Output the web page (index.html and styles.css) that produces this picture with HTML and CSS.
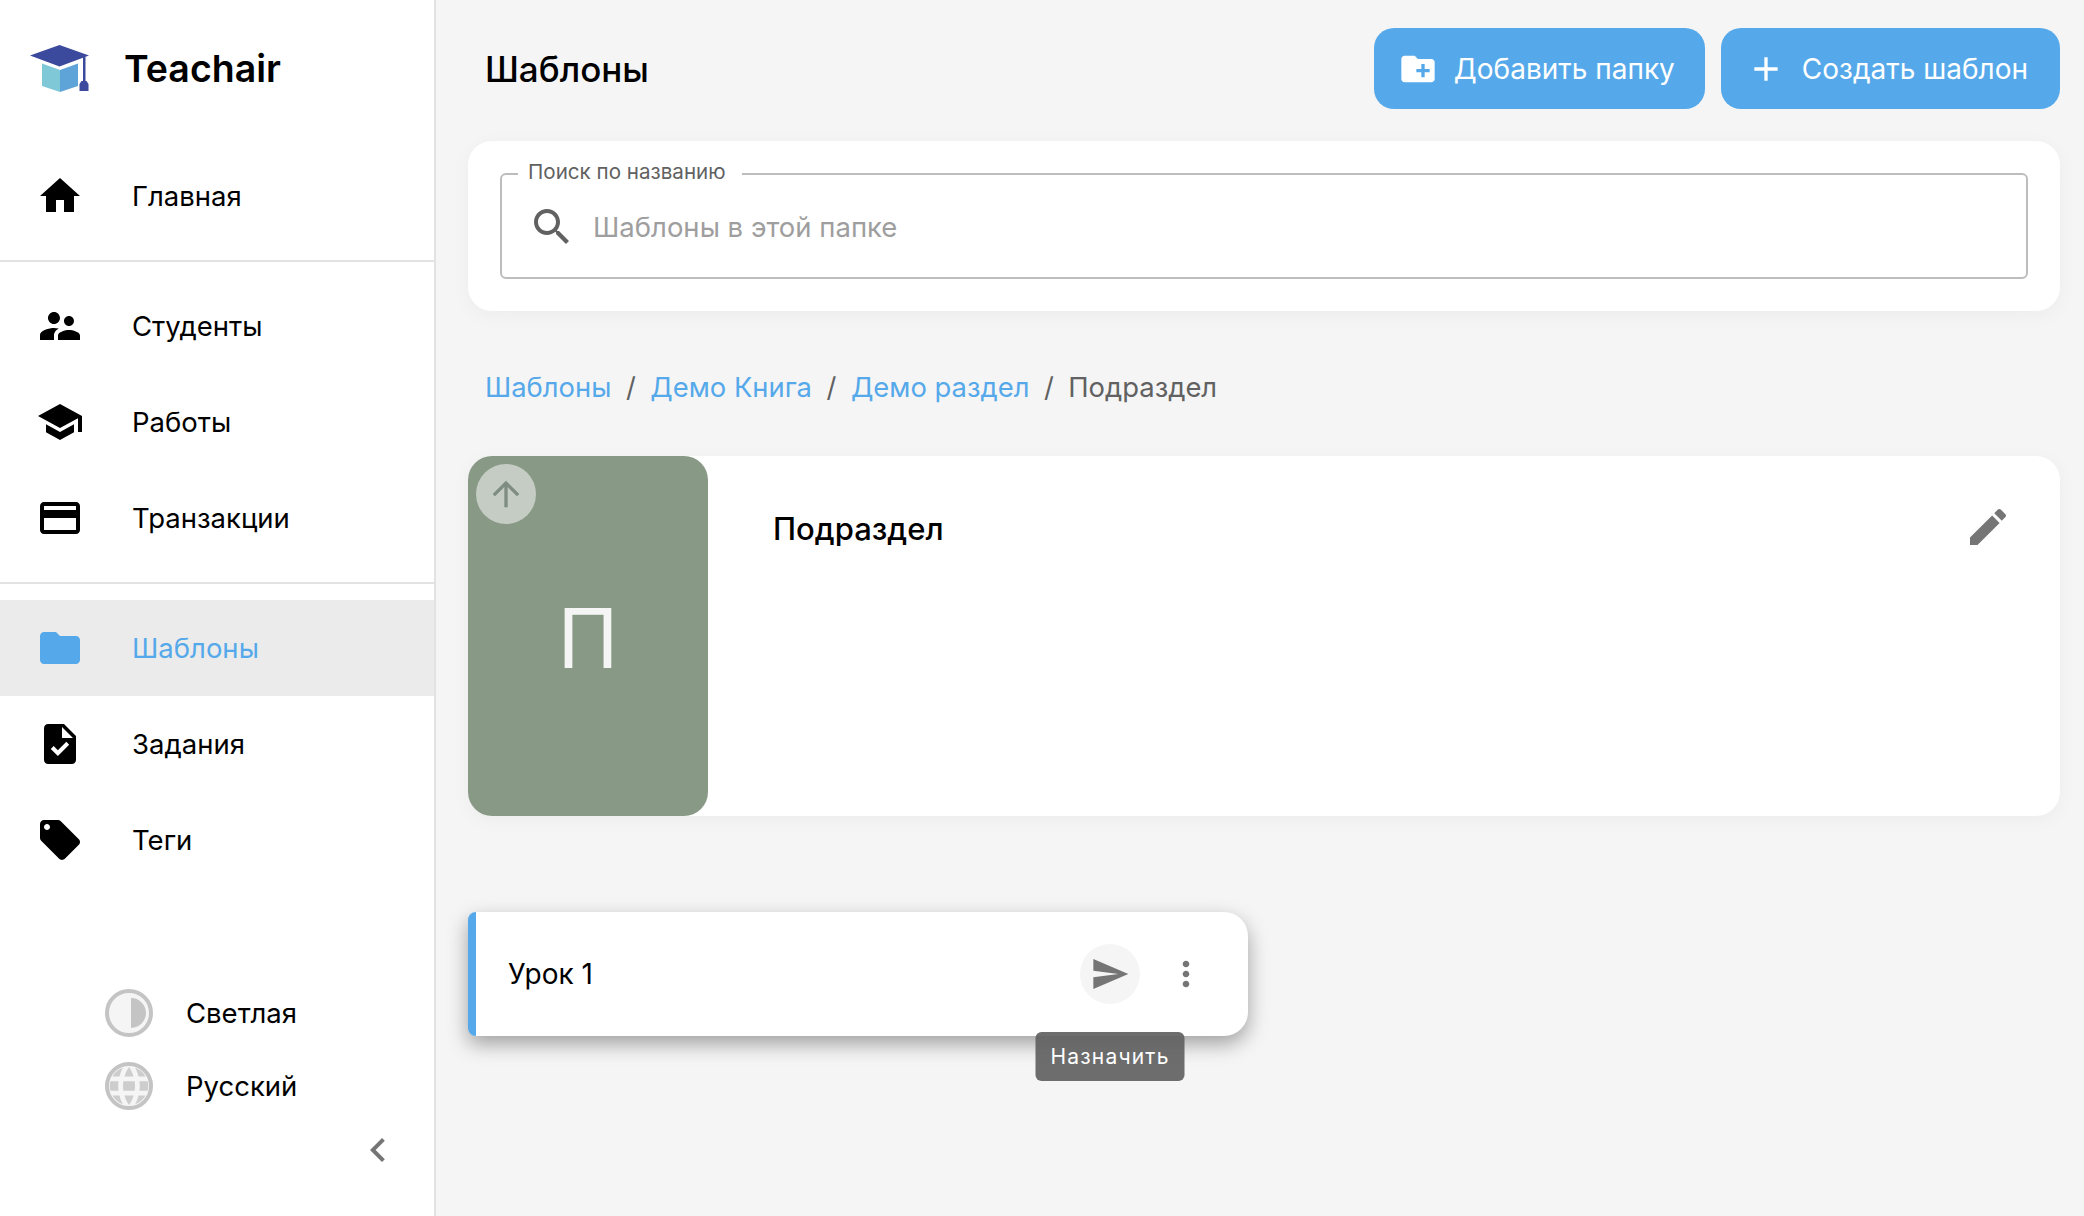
FILE: index.html
```html
<!DOCTYPE html>
<html lang="en">
<head>
    <meta charset="UTF-8">
    <meta name="viewport" content="width=device-width, initial-scale=1.0">
    <title>Teachair</title>
    <link rel="stylesheet" href="styles.css">
</head>
<body>
    <div class="app">
        <aside class="sidebar">
            <div class="logo">
                <svg class="logo-mark" viewBox="30 44 60 48" width="60" height="48">
                    <path fill="#7fc8d8" d="M42 62.500 60 69v22l-18-6z"/>
                    <path fill="#5fa4d8" d="M60 69l18-6.500V85l-18 6z"/>
                    <path fill="#3b4a9c" d="M59.500 44 89 54.500 59.500 65.500 30 54.500z"/>
                    <path fill="#3b4a9c" d="M83 56h2.500v24H83z"/>
                    <path fill="#3b4a9c" d="M81.500 80h5l2 3v7h-9v-7z"/>
                </svg>
                <span class="logo-name">Teachair</span>
            </div>

            <a class="nav-item">
                <svg class="nav-icon" viewBox="0 0 24 24"><path d="M10 20v-6h4v6h5v-8h3L12 3 2 12h3v8z"/></svg>
                <span>Главная</span>
            </a>
            <hr class="nav-divider">
            <a class="nav-item">
                <svg class="nav-icon" viewBox="0 0 24 24"><path d="M16.500 12c1.380 0 2.490-1.120 2.490-2.500S17.880 7 16.500 7C15.120 7 14 8.120 14 9.500s1.120 2.500 2.500 2.500zM9 11c1.660 0 2.990-1.340 2.990-3S10.660 5 9 5C7.340 5 6 6.340 6 8s1.340 3 3 3zm7.500 3c-1.830 0-5.500.92-5.500 2.750V19h11v-2.250c0-1.830-3.670-2.750-5.500-2.750zM9 13c-2.330 0-7 1.170-7 3.500V19h7v-2.250c0-.85.33-2.340 2.370-3.470C10.500 13.100 9.660 13 9 13z"/></svg>
                <span>Студенты</span>
            </a>
            <a class="nav-item">
                <svg class="nav-icon" viewBox="0 0 24 24"><path d="M5 13.180v4L12 21l7-3.820v-4L12 17l-7-3.820zM12 3 1 9l11 6 9-4.910V17h2V9L12 3z"/></svg>
                <span>Работы</span>
            </a>
            <a class="nav-item">
                <svg class="nav-icon" viewBox="0 0 24 24"><path d="M20 4H4c-1.110 0-1.990.89-1.990 2L2 18c0 1.110.89 2 2 2h16c1.110 0 2-.89 2-2V6c0-1.110-.89-2-2-2zm0 14H4v-6h16v6zm0-10H4V6h16v2z"/></svg>
                <span>Транзакции</span>
            </a>
            <hr class="nav-divider">
            <a class="nav-item active">
                <svg class="nav-icon" viewBox="0 0 24 24"><path d="M10 4H4c-1.100 0-1.990.9-1.990 2L2 18c0 1.100.9 2 2 2h16c1.100 0 2-.9 2-2V8c0-1.100-.9-2-2-2h-8l-2-2z"/></svg>
                <span>Шаблоны</span>
            </a>
            <a class="nav-item">
                <svg class="nav-icon" viewBox="0 0 24 24"><path d="M14 2H6c-1.100 0-1.990.9-1.990 2L4 20c0 1.100.89 2 1.990 2H18c1.100 0 2-.9 2-2V8l-6-6zm-3.060 16L7.400 14.460l1.410-1.410 2.120 2.120 4.240-4.240 1.410 1.410L10.940 18zM13 9V3.500L18.500 9H13z"/></svg>
                <span>Задания</span>
            </a>
            <a class="nav-item">
                <svg class="nav-icon" viewBox="0 0 24 24"><path d="M21.410 11.580l-9-9C12.050 2.220 11.550 2 11 2H4c-1.100 0-2 .9-2 2v7c0 .55.22 1.050.59 1.420l9 9c.36.36.86.58 1.410.58.55 0 1.050-.22 1.410-.59l7-7c.37-.36.59-.86.59-1.410 0-.55-.23-1.060-.59-1.420zM5.500 7C4.670 7 4 6.330 4 5.500S4.670 4 5.500 4 7 4.670 7 5.500 6.330 7 5.500 7z"/></svg>
                <span>Теги</span>
            </a>

            <div class="sidebar-bottom">
                <div class="setting">
                    <svg class="setting-icon" viewBox="0 0 48 48">
                        <circle cx="24" cy="24" r="22" fill="#f5f5f5" stroke="#c4c4c4" stroke-width="4"/>
                        <path fill="#c4c4c4" d="M26 9a15 15 0 0 1 0 30z"/>
                    </svg>
                    <span>Светлая</span>
                </div>
                <div class="setting">
                    <svg class="setting-icon" viewBox="2 2 20 20">
                        <circle cx="12" cy="12" r="9.170" fill="#f5f5f5" stroke="#c4c4c4" stroke-width="1.670"/>
                        <g fill="#cdcdcd">
                            <path d="M18.920 8h-2.950c-.32-1.250-.78-2.450-1.380-3.560 1.840.63 3.370 1.910 4.330 3.560z"/>
                            <path d="M12 4.040c.83 1.200 1.480 2.530 1.910 3.960h-3.820c.43-1.430 1.080-2.760 1.910-3.960z"/>
                            <path d="M4.260 14C4.100 13.360 4 12.690 4 12s.1-1.360.26-2h3.380c-.08.66-.14 1.320-.14 2 0 .68.06 1.340.14 2H4.260z"/>
                            <path d="M5.080 16h2.950c.32 1.250.78 2.450 1.380 3.560-1.840-.63-3.370-1.900-4.330-3.560z"/>
                            <path d="M8.030 8H5.080c.96-1.660 2.490-2.930 4.330-3.560C8.810 5.550 8.350 6.750 8.030 8z"/>
                            <path d="M12 19.960c-.83-1.200-1.480-2.530-1.910-3.960h3.820c-.43 1.430-1.080 2.760-1.910 3.960z"/>
                            <path d="M14.340 14H9.660c-.09-.66-.16-1.320-.16-2 0-.68.07-1.350.16-2h4.680c.09.65.16 1.320.16 2 0 .68-.07 1.340-.16 2z"/>
                            <path d="M14.590 19.560c.6-1.110 1.060-2.310 1.380-3.560h2.950c-.96 1.650-2.490 2.930-4.330 3.560z"/>
                            <path d="M16.360 14c.08-.66.14-1.320.14-2 0-.68-.06-1.340-.14-2h3.380c.16.64.26 1.310.26 2s-.1 1.360-.26 2h-3.380z"/>
                        </g>
                    </svg>
                    <span>Русский</span>
                </div>
                <div class="collapse-row">
                    <svg class="collapse-icon" viewBox="0 0 24 24"><path d="M15.410 7.410 14 6l-6 6 6 6 1.410-1.410L10.830 12z"/></svg>
                </div>
            </div>
        </aside>

        <main class="content">
            <header class="topbar">
                <h1 class="page-title">Шаблоны</h1>
                <div class="topbar-actions">
                    <button class="btn">
                        <svg class="btn-icon" viewBox="0 0 24 24"><path d="M20 6h-8l-2-2H4c-1.110 0-1.990.89-1.990 2L2 18c0 1.110.89 2 2 2h16c1.110 0 2-.89 2-2V8c0-1.110-.89-2-2-2zm-1 8h-3v3h-2v-3h-3v-2h3V9h2v3h3v2z"/></svg>
                        Добавить папку
                    </button>
                    <button class="btn">
                        <svg class="btn-icon" viewBox="0 0 24 24"><path d="M19 13h-6v6h-2v-6H5v-2h6V5h2v6h6v2z"/></svg>
                        Создать шаблон
                    </button>
                </div>
            </header>

            <section class="search-card">
                <fieldset class="search-field">
                    <legend>Поиск по названию</legend>
                    <svg class="search-icon" viewBox="0 0 24 24"><path d="M15.500 14h-.79l-.28-.27C15.410 12.590 16 11.110 16 9.500 16 5.910 13.090 3 9.500 3S3 5.910 3 9.500 5.910 16 9.500 16c1.610 0 3.090-.59 4.230-1.570l.27.28v.79l5 4.990L20.490 19l-4.990-5zm-6 0C7.010 14 5 11.990 5 9.500S7.010 5 9.500 5 14 7.010 14 9.500 11.990 14 9.500 14z"/></svg>
                    <input class="search-input" type="text" placeholder="Шаблоны в этой папке">
                </fieldset>
            </section>

            <nav class="breadcrumbs">
                <a>Шаблоны</a>
                <span class="crumb-sep">/</span>
                <a>Демо Книга</a>
                <span class="crumb-sep">/</span>
                <a>Демо раздел</a>
                <span class="crumb-sep">/</span>
                <span class="crumb-current">Подраздел</span>
            </nav>

            <section class="folder-card">
                <div class="folder-cover">
                    <div class="up-btn">
                        <svg class="up-icon" viewBox="0 0 24 24"><path d="M4 12l1.410 1.410L11 7.830V20h2V7.830l5.580 5.590L20 12l-8-8-8 8z"/></svg>
                    </div>
                    <span class="folder-letter">П</span>
                </div>
                <h2 class="folder-name">Подраздел</h2>
                <svg class="edit-icon" viewBox="0 0 24 24"><path d="M3 17.250V21h3.750L17.810 9.940l-3.750-3.750L3 17.250zM20.710 7.040c.39-.39.39-1.020 0-1.410l-2.340-2.340c-.39-.39-1.020-.39-1.410 0l-1.830 1.830 3.750 3.750 1.830-1.830z"/></svg>
            </section>

            <section class="lesson-card">
                <span class="lesson-name">Урок 1</span>
                <div class="assign-btn">
                    <svg class="lesson-icon" viewBox="0 0 24 24"><path d="M2.010 21 2 14l15-2-15-2 .01-7L23 12 2.010 21z"/></svg>
                    <div class="tooltip">Назначить</div>
                </div>
                <svg class="lesson-icon more-icon" viewBox="0 0 24 24"><path d="M12 8c1.100 0 2-.9 2-2s-.9-2-2-2-2 .9-2 2 .9 2 2 2zm0 2c-1.100 0-2 .9-2 2s.9 2 2 2 2-.9 2-2-.9-2-2-2zm0 6c-1.100 0-2 .9-2 2s.9 2 2 2 2-.9 2-2-.9-2-2-2z"/></svg>
            </section>
        </main>
    </div>
</body>
</html>
```

FILE: styles.css
```css
* {
    box-sizing: border-box;
}
html, body {
    margin: 0;
    height: 100%;
    overflow: hidden;
}
body {
    font-family: Inter, "Noto Sans", sans-serif;
    font-size: 28px;
    color: #000;
    background-color: #f5f5f5;
}
.app {
    display: flex;
    height: 1216px;
}

/* Sidebar */
.sidebar {
    width: 436px;
    flex-shrink: 0;
    display: flex;
    flex-direction: column;
    background-color: #fff;
    border-right: 2px solid #e2e2e2;
}
.logo {
    height: 148px;
    display: flex;
    align-items: center;
    padding: 0 0 11px 30px;
    gap: 34px;
}
.logo-mark {
    flex-shrink: 0;
}
.logo-name {
    font-size: 37.500px;
    font-weight: 600;
}
.nav-item {
    height: 96px;
    flex-shrink: 0;
    display: flex;
    align-items: center;
    padding-left: 36px;
    gap: 48px;
    font-size: 27.500px;
}
.nav-icon {
    width: 48px;
    height: 48px;
    fill: #000;
}
.nav-item.active {
    background-color: #ebebeb;
    color: #55a9ea;
}
.nav-item.active .nav-icon {
    fill: #55a9ea;
}
.nav-divider {
    flex-shrink: 0;
    width: 100%;
    height: 2px;
    margin: 16px 0;
    border: none;
    background-color: #e2e2e2;
}
.sidebar-bottom {
    margin-top: auto;
    padding: 0 0 42px 105px;
    display: flex;
    flex-direction: column;
    gap: 16px;
}
.setting {
    display: flex;
    align-items: center;
    gap: 33px;
    height: 48px;
    font-size: 27.500px;
}
.setting + .setting {
    margin-top: 9px;
}
.setting-icon {
    width: 48px;
    height: 48px;
}
.collapse-row {
    display: flex;
    justify-content: flex-end;
    padding-right: 32px;
}
.collapse-icon {
    width: 48px;
    height: 48px;
    fill: #757575;
}

/* Main area */
.content {
    flex: 1;
    min-width: 0;
    padding: 28px 24px 0 32px;
    display: flex;
    flex-direction: column;
}
.topbar {
    height: 81px;
    display: flex;
    align-items: center;
    justify-content: space-between;
    padding-left: 17px;
}
.page-title {
    margin: 0;
    font-size: 35px;
    font-weight: 500;
}
.topbar-actions {
    display: flex;
    gap: 16px;
}
.btn {
    height: 81px;
    display: flex;
    align-items: center;
    gap: 16px;
    padding: 0 30px 0 24px;
    border: none;
    border-radius: 20px;
    background-color: #55a9ea;
    color: #fff;
    font-family: inherit;
    font-size: 28px;
    cursor: pointer;
}
.btn + .btn {
    padding: 0 32px 0 25px;
}
.btn-icon {
    width: 40px;
    height: 40px;
    fill: #fff;
}

.search-card {
    margin-top: 32px;
    height: 170px;
    padding: 18px 32px 0;
    background-color: #fff;
    border-radius: 24px;
    box-shadow: 0 4px 20px rgba(0, 0, 0, 0.04);
}
.search-field {
    margin: 0;
    height: 120px;
    padding: 0 26px 13px;
    display: flex;
    align-items: center;
    gap: 17px;
    border: 2px solid #bdbdbd;
    border-radius: 6px;
}
.search-field legend {
    margin-left: -10px;
    padding: 0 16px 5px 10px;
    font-size: 20.600px;
    color: #616161;
}
.search-icon {
    width: 48px;
    height: 48px;
    flex-shrink: 0;
    fill: #616161;
}
.search-input {
    flex: 1;
    border: none;
    outline: none;
    padding: 0;
    font-family: inherit;
    font-size: 27.500px;
    color: #000;
    background: transparent;
}
.search-input::placeholder {
    color: #9e9e9e;
    opacity: 1;
}

.breadcrumbs {
    margin-top: 55px;
    height: 42px;
    display: flex;
    align-items: center;
    gap: 14.500px;
    padding-left: 17px;
    font-size: 27.400px;
}
.breadcrumbs a {
    color: #55a9ea;
}
.crumb-sep, .crumb-current {
    color: #616161;
}

.folder-card {
    margin-top: 48px;
    height: 360px;
    display: flex;
    background-color: #fff;
    border-radius: 24px;
    box-shadow: 0 4px 20px rgba(0, 0, 0, 0.04);
}
.folder-cover {
    position: relative;
    width: 240px;
    flex-shrink: 0;
    display: flex;
    align-items: center;
    justify-content: center;
    padding-top: 4px;
    background-color: #889986;
    border-radius: 24px;
}
.up-btn {
    position: absolute;
    top: 8px;
    left: 8px;
    width: 60px;
    height: 60px;
    display: flex;
    align-items: center;
    justify-content: center;
    border-radius: 50%;
    background-color: rgba(255, 255, 255, 0.5);
}
.up-icon {
    width: 40px;
    height: 40px;
    fill: #7f8c82;
}
.folder-letter {
    font-size: 82px;
    font-weight: 400;
    color: #f5f5f5;
}
.folder-name {
    margin: 53px 0 0 65px;
    font-size: 31px;
    line-height: 40px;
    font-weight: 500;
    flex: 1;
}
.edit-icon {
    width: 48px;
    height: 48px;
    margin: 47px 48px 0 0;
    fill: #757575;
}

.lesson-card {
    margin-top: 96px;
    width: 780px;
    height: 124px;
    display: flex;
    align-items: center;
    padding-left: 32px;
    background-color: #fff;
    border-left: 8px solid #55a9ea;
    border-radius: 8px 24px 24px 8px;
    box-shadow: 0 8px 20px rgba(0, 0, 0, 0.35);
}
.lesson-name {
    flex: 1;
}
.assign-btn {
    position: relative;
    width: 60px;
    height: 60px;
    display: flex;
    align-items: center;
    justify-content: center;
    border-radius: 50%;
    background-color: #f5f5f5;
}
.lesson-icon {
    width: 40px;
    height: 40px;
    fill: #757575;
}
.more-icon {
    margin: 0 42px 0 26px;
}
.tooltip {
    position: absolute;
    top: 88px;
    left: 50%;
    transform: translateX(-50%);
    width: 149px;
    height: 49px;
    display: flex;
    align-items: center;
    justify-content: center;
    border-radius: 6px;
    background-color: rgba(97, 97, 97, 0.92);
    color: #fff;
    font-size: 21px;
    letter-spacing: 1.200px;
}
```
